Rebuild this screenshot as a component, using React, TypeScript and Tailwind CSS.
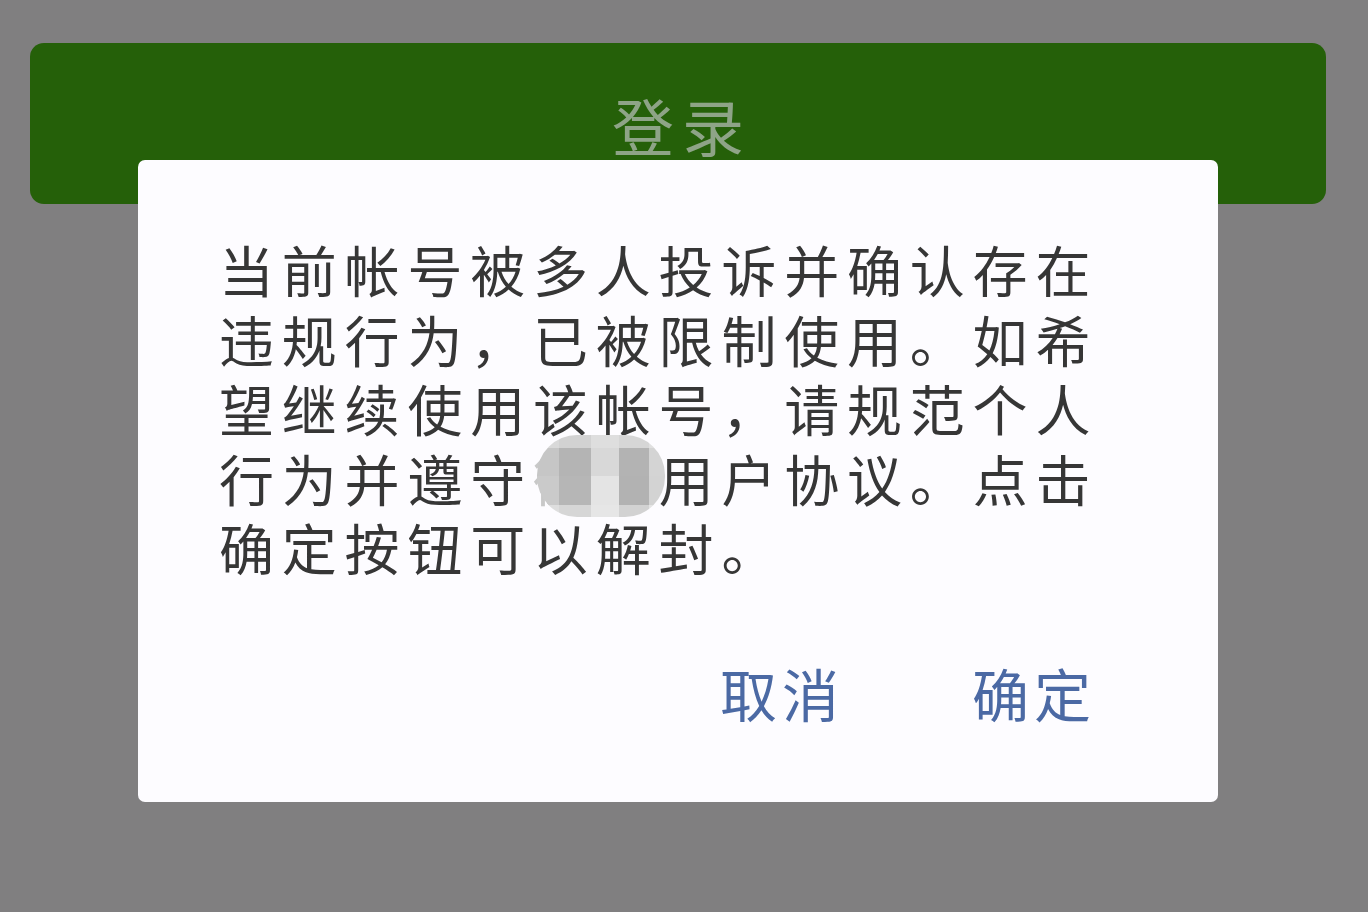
import React from "react";

const lines = [
  "当前帐号被多人投诉并确认存在",
  "违规行为，已被限制使用。如希",
  "望继续使用该帐号，请规范个人",
];

export default function App() {
  const font = { fontFamily: '"Noto Sans CJK SC", "Noto Sans", sans-serif' };
  return (
    <div
      className="relative h-[912px] w-[1368px] overflow-hidden bg-[#807f80]"
      style={font}
    >
      <div className="pt-[43px] pl-[30px]">
        <div className="flex h-[161px] w-[1296px] items-start justify-center rounded-[14px] bg-[#256009] pt-[51px]">
          <span className="text-[62px] leading-[62px] tracking-[8px] text-[#8ea487] pl-[8px]">
            登录
          </span>
        </div>
      </div>

      <div className="absolute left-[138px] top-[160px] flex h-[642px] w-[1080px] flex-col rounded-[7px] bg-[#fdfcff]">
        <div className="pl-[81px] pt-[74px] text-[55px] leading-[69.5px] tracking-[7.8px] text-[#363636]">
          {lines.map((l) => (
            <div key={l} className="whitespace-nowrap">
              {l}
            </div>
          ))}
          <div className="whitespace-nowrap">
            行为并遵守
            <span className="relative inline-block">
              <span className="text-[#c8c8c8]">微信</span>
              <span className="absolute left-[4px] top-[-8px] grid h-[82px] w-[128px] grid-cols-[22px_32px_28px_30px_16px] grid-rows-[13px_28px_29px_12px] overflow-hidden rounded-[40px]">
                <span className="bg-[#d9d9d9]" />
                <span className="bg-[#d2d2d2]" />
                <span className="bg-[#dedede]" />
                <span className="bg-[#d6d6d6]" />
                <span className="bg-[#e0e0e0]" />
                <span className="bg-[#c6c6c6]" />
                <span className="bg-[#b4b4b4]" />
                <span className="bg-[#d8d8d8]" />
                <span className="bg-[#b3b3b3]" />
                <span className="bg-[#d4d4d4]" />
                <span className="bg-[#cacaca]" />
                <span className="bg-[#b6b6b6]" />
                <span className="bg-[#e4e4e4]" />
                <span className="bg-[#b2b2b2]" />
                <span className="bg-[#d3d3d3]" />
                <span className="bg-[#dedede]" />
                <span className="bg-[#d6d6d6]" />
                <span className="bg-[#e6e6e6]" />
                <span className="bg-[#d2d2d2]" />
                <span className="bg-[#e4e4e4]" />
              </span>
            </span>
            用户协议。点击
          </div>
          <div className="whitespace-nowrap">确定按钮可以解封。</div>
        </div>

        <div className="mt-[82px] flex justify-end gap-[128px] pr-[122px] text-[57px] leading-[57px] tracking-[5px] text-[#4b69a4]">
          <span>取消</span>
          <span>确定</span>
        </div>
      </div>
    </div>
  );
}
